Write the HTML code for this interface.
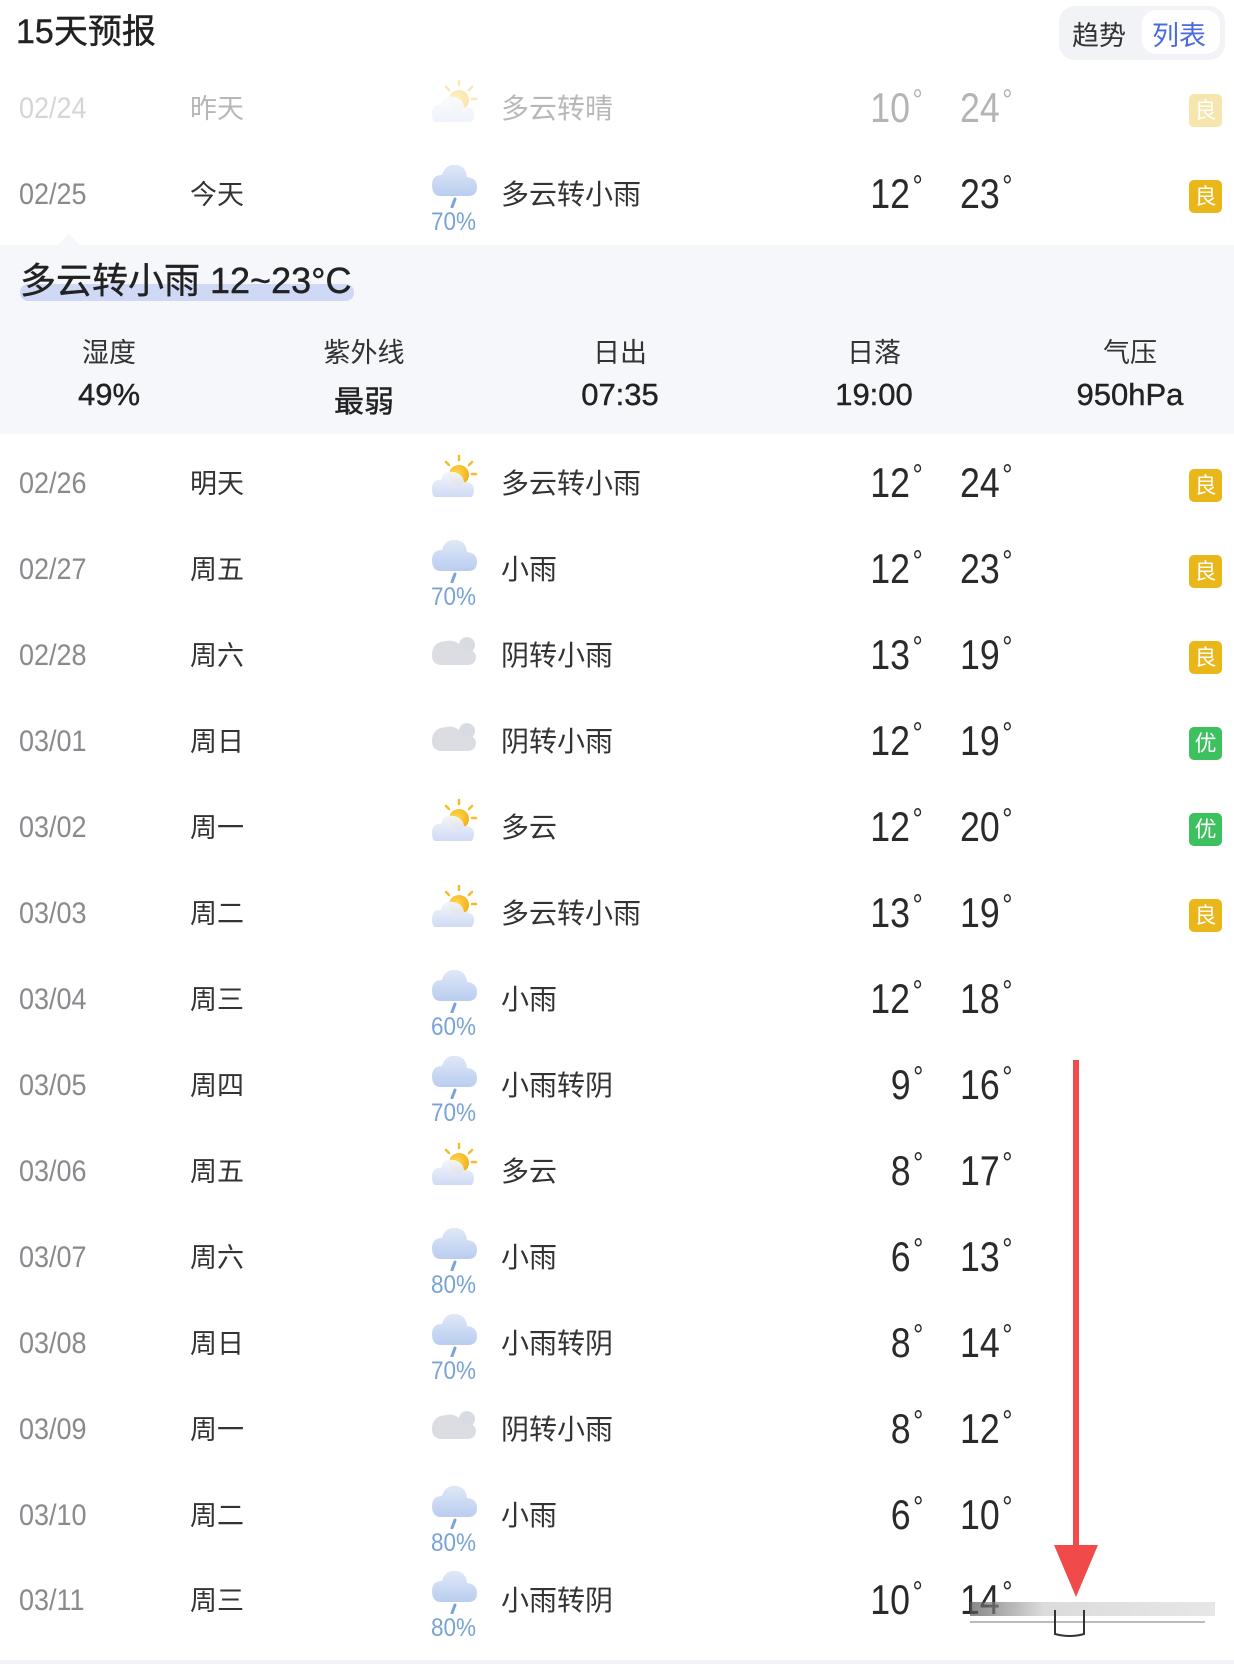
<!DOCTYPE html>
<html><head><meta charset="utf-8"><style>
*{margin:0;padding:0;box-sizing:border-box}
body{width:1234px;height:1664px;background:#fff;position:relative;overflow:hidden;font-family:"Liberation Sans","Noto Sans CJK SC",sans-serif;color:#222}
.a{position:absolute;white-space:nowrap}
.row{position:absolute;left:0;width:1234px;height:86px}
.d{position:absolute;left:19px;top:26px;font-size:30px;color:#8a8a8e;line-height:34px;transform:scaleX(.9);transform-origin:left}
.w{position:absolute;left:190px;top:26px;font-size:27px;color:#333;line-height:34px}
.ic{position:absolute;left:432px;top:12px;width:50px;height:44px}
.pc{position:absolute;left:431px;top:57px;font-size:25px;color:#78a3d6;line-height:26px;transform:scaleX(.9);transform-origin:left}
.c{position:absolute;left:501px;top:26px;font-size:28px;color:#333;line-height:34px}
.lo{position:absolute;right:311px;top:20px;font-size:42px;color:#2a2a2a;line-height:44px;height:44px;transform:scaleX(.85);transform-origin:right}
.hi{position:absolute;left:960px;top:20px;font-size:42px;color:#2a2a2a;line-height:44px;height:44px;transform:scaleX(.85);transform-origin:left}
.lo i,.hi i{font-style:normal;font-size:30px;position:relative;top:-12px;margin-left:3px;line-height:0}
.b{position:absolute;left:1189px;top:28px;width:33px;height:33px;border-radius:5px;color:#fff;font-size:22px;line-height:33px;text-align:center}
.y{background:#e9b71a}.g{background:#3dc15f}
.fade{opacity:.35}
</style></head><body>
<svg width="0" height="0" style="position:absolute">
<defs>
<radialGradient id="sg" cx=".4" cy=".4" r=".6"><stop offset="0" stop-color="#ffd84a"/><stop offset="1" stop-color="#f5b21c"/></radialGradient>
<linearGradient id="cg" x1="0" y1="0" x2="0" y2="1"><stop offset="0" stop-color="#f4f6fb"/><stop offset="1" stop-color="#c9d6f2"/></linearGradient>
<linearGradient id="rg" x1="0" y1="0" x2="0" y2="1"><stop offset="0" stop-color="#dfe8f8"/><stop offset="1" stop-color="#b9cdef"/></linearGradient>
<symbol id="sun" viewBox="0 0 50 44">
<g stroke="#f5bd2a" stroke-width="2.5" stroke-linecap="round"><line x1="27" y1="3" x2="27" y2="7"/><line x1="40" y1="9" x2="37" y2="12"/><line x1="44" y1="21" x2="40" y2="21"/><line x1="14" y1="9" x2="17" y2="12"/></g>
<circle cx="27" cy="22" r="10" fill="url(#sg)"/>
<path d="M8 46 Q0 46 0 36 Q0 26 9 27 Q11 17 22 19 Q31 21 32 29 Q42 29 42 37 Q42 46 33 46 Z" fill="url(#cg)" opacity=".95"/>
</symbol>
<symbol id="rain" viewBox="0 0 50 44">
<path d="M9 32 Q0 32 0 21 Q0 11 10 11 Q13 0 24 1 Q34 2 35 13 Q45 14 45 23 Q45 32 36 32 Z" fill="url(#rg)"/>
<path d="M23 35 L20 43" stroke="#7aa3dc" stroke-width="3" stroke-linecap="round"/>
</symbol>
<symbol id="cloud" viewBox="0 0 50 44">
<circle cx="35" cy="20" r="8" fill="#d9dbe2"/>
<path d="M10 40 Q0 40 0 30 Q0 17 14 16 Q25 14 31 24 Q42 23 44 31 Q44 40 35 40 Z" fill="#dcdde3"/>
</symbol>
</defs></svg>

<div class="a" style="left:16px;top:12px;font-size:34px;color:#222;line-height:40px;-webkit-text-stroke:.4px #222">15天预报</div>
<div class="a" style="left:1059px;top:6px;width:166px;height:54px;border-radius:16px;background:#f2f3f6"></div>
<div class="a" style="left:1072px;top:14px;font-size:27px;color:#333">趋势</div>
<div class="a" style="left:1142px;top:10px;width:78px;height:44px;border-radius:14px;background:#fff"></div>
<div class="a" style="left:1152px;top:14px;font-size:27px;color:#4a6be0">列表</div>

<div class="row fade" style="top:66px"><div class="d">02/24</div><div class="w">昨天</div><svg class="ic"><use href="#sun"/></svg><div class="c">多云转晴</div><div class="lo">10<i>°</i></div><div class="hi">24<i>°</i></div><div class="b y">良</div></div>
<div class="row" style="top:152px"><div class="d">02/25</div><div class="w">今天</div><svg class="ic"><use href="#rain"/></svg><div class="pc">70%</div><div class="c">多云转小雨</div><div class="lo">12<i>°</i></div><div class="hi">23<i>°</i></div><div class="b y">良</div></div>

<div class="a" style="left:0;top:245px;width:1234px;height:189px;background:#f5f7fb"></div>
<div class="a" style="left:58px;top:234px;width:0;height:0;border-left:11px solid transparent;border-right:11px solid transparent;border-bottom:11px solid #f5f7fb"></div>
<div class="a" style="left:20px;top:284px;width:334px;height:17px;border-radius:8px;background:#cfd9f6"></div>
<div class="a" style="left:20px;top:260px;font-size:36px;color:#222;line-height:42px;-webkit-text-stroke:.4px #222">多云转小雨 12~23°C</div>
<div class="a" style="left:59px;top:331px;width:100px;text-align:center;font-size:27px;color:#333">湿度</div>
<div class="a" style="left:59px;top:377px;width:100px;text-align:center;font-size:31px;color:#222;-webkit-text-stroke:.4px #222">49%</div>
<div class="a" style="left:304px;top:331px;width:120px;text-align:center;font-size:27px;color:#333">紫外线</div>
<div class="a" style="left:304px;top:377px;width:120px;text-align:center;font-size:30px;color:#222;-webkit-text-stroke:.4px #222">最弱</div>
<div class="a" style="left:560px;top:331px;width:120px;text-align:center;font-size:27px;color:#333">日出</div>
<div class="a" style="left:560px;top:377px;width:120px;text-align:center;font-size:31px;color:#222;-webkit-text-stroke:.4px #222">07:35</div>
<div class="a" style="left:814px;top:331px;width:120px;text-align:center;font-size:27px;color:#333">日落</div>
<div class="a" style="left:814px;top:377px;width:120px;text-align:center;font-size:31px;color:#222;-webkit-text-stroke:.4px #222">19:00</div>
<div class="a" style="left:1060px;top:331px;width:140px;text-align:center;font-size:27px;color:#333">气压</div>
<div class="a" style="left:1060px;top:377px;width:140px;text-align:center;font-size:31px;color:#222;-webkit-text-stroke:.4px #222">950hPa</div>

<div class="row" style="top:441px"><div class="d">02/26</div><div class="w">明天</div><svg class="ic"><use href="#sun"/></svg><div class="c">多云转小雨</div><div class="lo">12<i>°</i></div><div class="hi">24<i>°</i></div><div class="b y">良</div></div>
<div class="row" style="top:527px"><div class="d">02/27</div><div class="w">周五</div><svg class="ic"><use href="#rain"/></svg><div class="pc">70%</div><div class="c">小雨</div><div class="lo">12<i>°</i></div><div class="hi">23<i>°</i></div><div class="b y">良</div></div>
<div class="row" style="top:613px"><div class="d">02/28</div><div class="w">周六</div><svg class="ic"><use href="#cloud"/></svg><div class="c">阴转小雨</div><div class="lo">13<i>°</i></div><div class="hi">19<i>°</i></div><div class="b y">良</div></div>
<div class="row" style="top:699px"><div class="d">03/01</div><div class="w">周日</div><svg class="ic"><use href="#cloud"/></svg><div class="c">阴转小雨</div><div class="lo">12<i>°</i></div><div class="hi">19<i>°</i></div><div class="b g">优</div></div>
<div class="row" style="top:785px"><div class="d">03/02</div><div class="w">周一</div><svg class="ic"><use href="#sun"/></svg><div class="c">多云</div><div class="lo">12<i>°</i></div><div class="hi">20<i>°</i></div><div class="b g">优</div></div>
<div class="row" style="top:871px"><div class="d">03/03</div><div class="w">周二</div><svg class="ic"><use href="#sun"/></svg><div class="c">多云转小雨</div><div class="lo">13<i>°</i></div><div class="hi">19<i>°</i></div><div class="b y">良</div></div>
<div class="row" style="top:957px"><div class="d">03/04</div><div class="w">周三</div><svg class="ic"><use href="#rain"/></svg><div class="pc">60%</div><div class="c">小雨</div><div class="lo">12<i>°</i></div><div class="hi">18<i>°</i></div></div>
<div class="row" style="top:1043px"><div class="d">03/05</div><div class="w">周四</div><svg class="ic"><use href="#rain"/></svg><div class="pc">70%</div><div class="c">小雨转阴</div><div class="lo">9<i>°</i></div><div class="hi">16<i>°</i></div></div>
<div class="row" style="top:1129px"><div class="d">03/06</div><div class="w">周五</div><svg class="ic"><use href="#sun"/></svg><div class="c">多云</div><div class="lo">8<i>°</i></div><div class="hi">17<i>°</i></div></div>
<div class="row" style="top:1215px"><div class="d">03/07</div><div class="w">周六</div><svg class="ic"><use href="#rain"/></svg><div class="pc">80%</div><div class="c">小雨</div><div class="lo">6<i>°</i></div><div class="hi">13<i>°</i></div></div>
<div class="row" style="top:1301px"><div class="d">03/08</div><div class="w">周日</div><svg class="ic"><use href="#rain"/></svg><div class="pc">70%</div><div class="c">小雨转阴</div><div class="lo">8<i>°</i></div><div class="hi">14<i>°</i></div></div>
<div class="row" style="top:1387px"><div class="d">03/09</div><div class="w">周一</div><svg class="ic"><use href="#cloud"/></svg><div class="c">阴转小雨</div><div class="lo">8<i>°</i></div><div class="hi">12<i>°</i></div></div>
<div class="row" style="top:1473px"><div class="d">03/10</div><div class="w">周二</div><svg class="ic"><use href="#rain"/></svg><div class="pc">80%</div><div class="c">小雨</div><div class="lo">6<i>°</i></div><div class="hi">10<i>°</i></div></div>
<div class="row" style="top:1558px"><div class="d">03/11</div><div class="w">周三</div><svg class="ic"><use href="#rain"/></svg><div class="pc">80%</div><div class="c">小雨转阴</div><div class="lo">10<i>°</i></div><div class="hi">14<i>°</i></div></div>

<svg class="a" style="left:970px;top:1590px" width="250" height="50">
<defs><linearGradient id="fg" x1="0" x2="1"><stop offset="0" stop-color="#555"/><stop offset=".3" stop-color="#ccc"/><stop offset="1" stop-color="#ddd"/></linearGradient></defs>
<rect x="0" y="12" width="245" height="14" fill="url(#fg)" opacity=".7"/>
<line x1="0" y1="32" x2="235" y2="32" stroke="#bbb" stroke-width="2"/>
<path d="M85 20 V44 Q100 48 114 44 V20" fill="none" stroke="#333" stroke-width="2"/>
</svg>
<svg class="a" style="left:1050px;top:1060px" width="52" height="540">
<rect x="23" y="0" width="6" height="490" fill="#f04a4a"/>
<path d="M4 485 L48 485 L26 537 Z" fill="#f04a4a"/>
</svg>
<div class="a" style="left:0;top:1660px;width:1234px;height:4px;background:#f2f3f6"></div>
</body></html>
